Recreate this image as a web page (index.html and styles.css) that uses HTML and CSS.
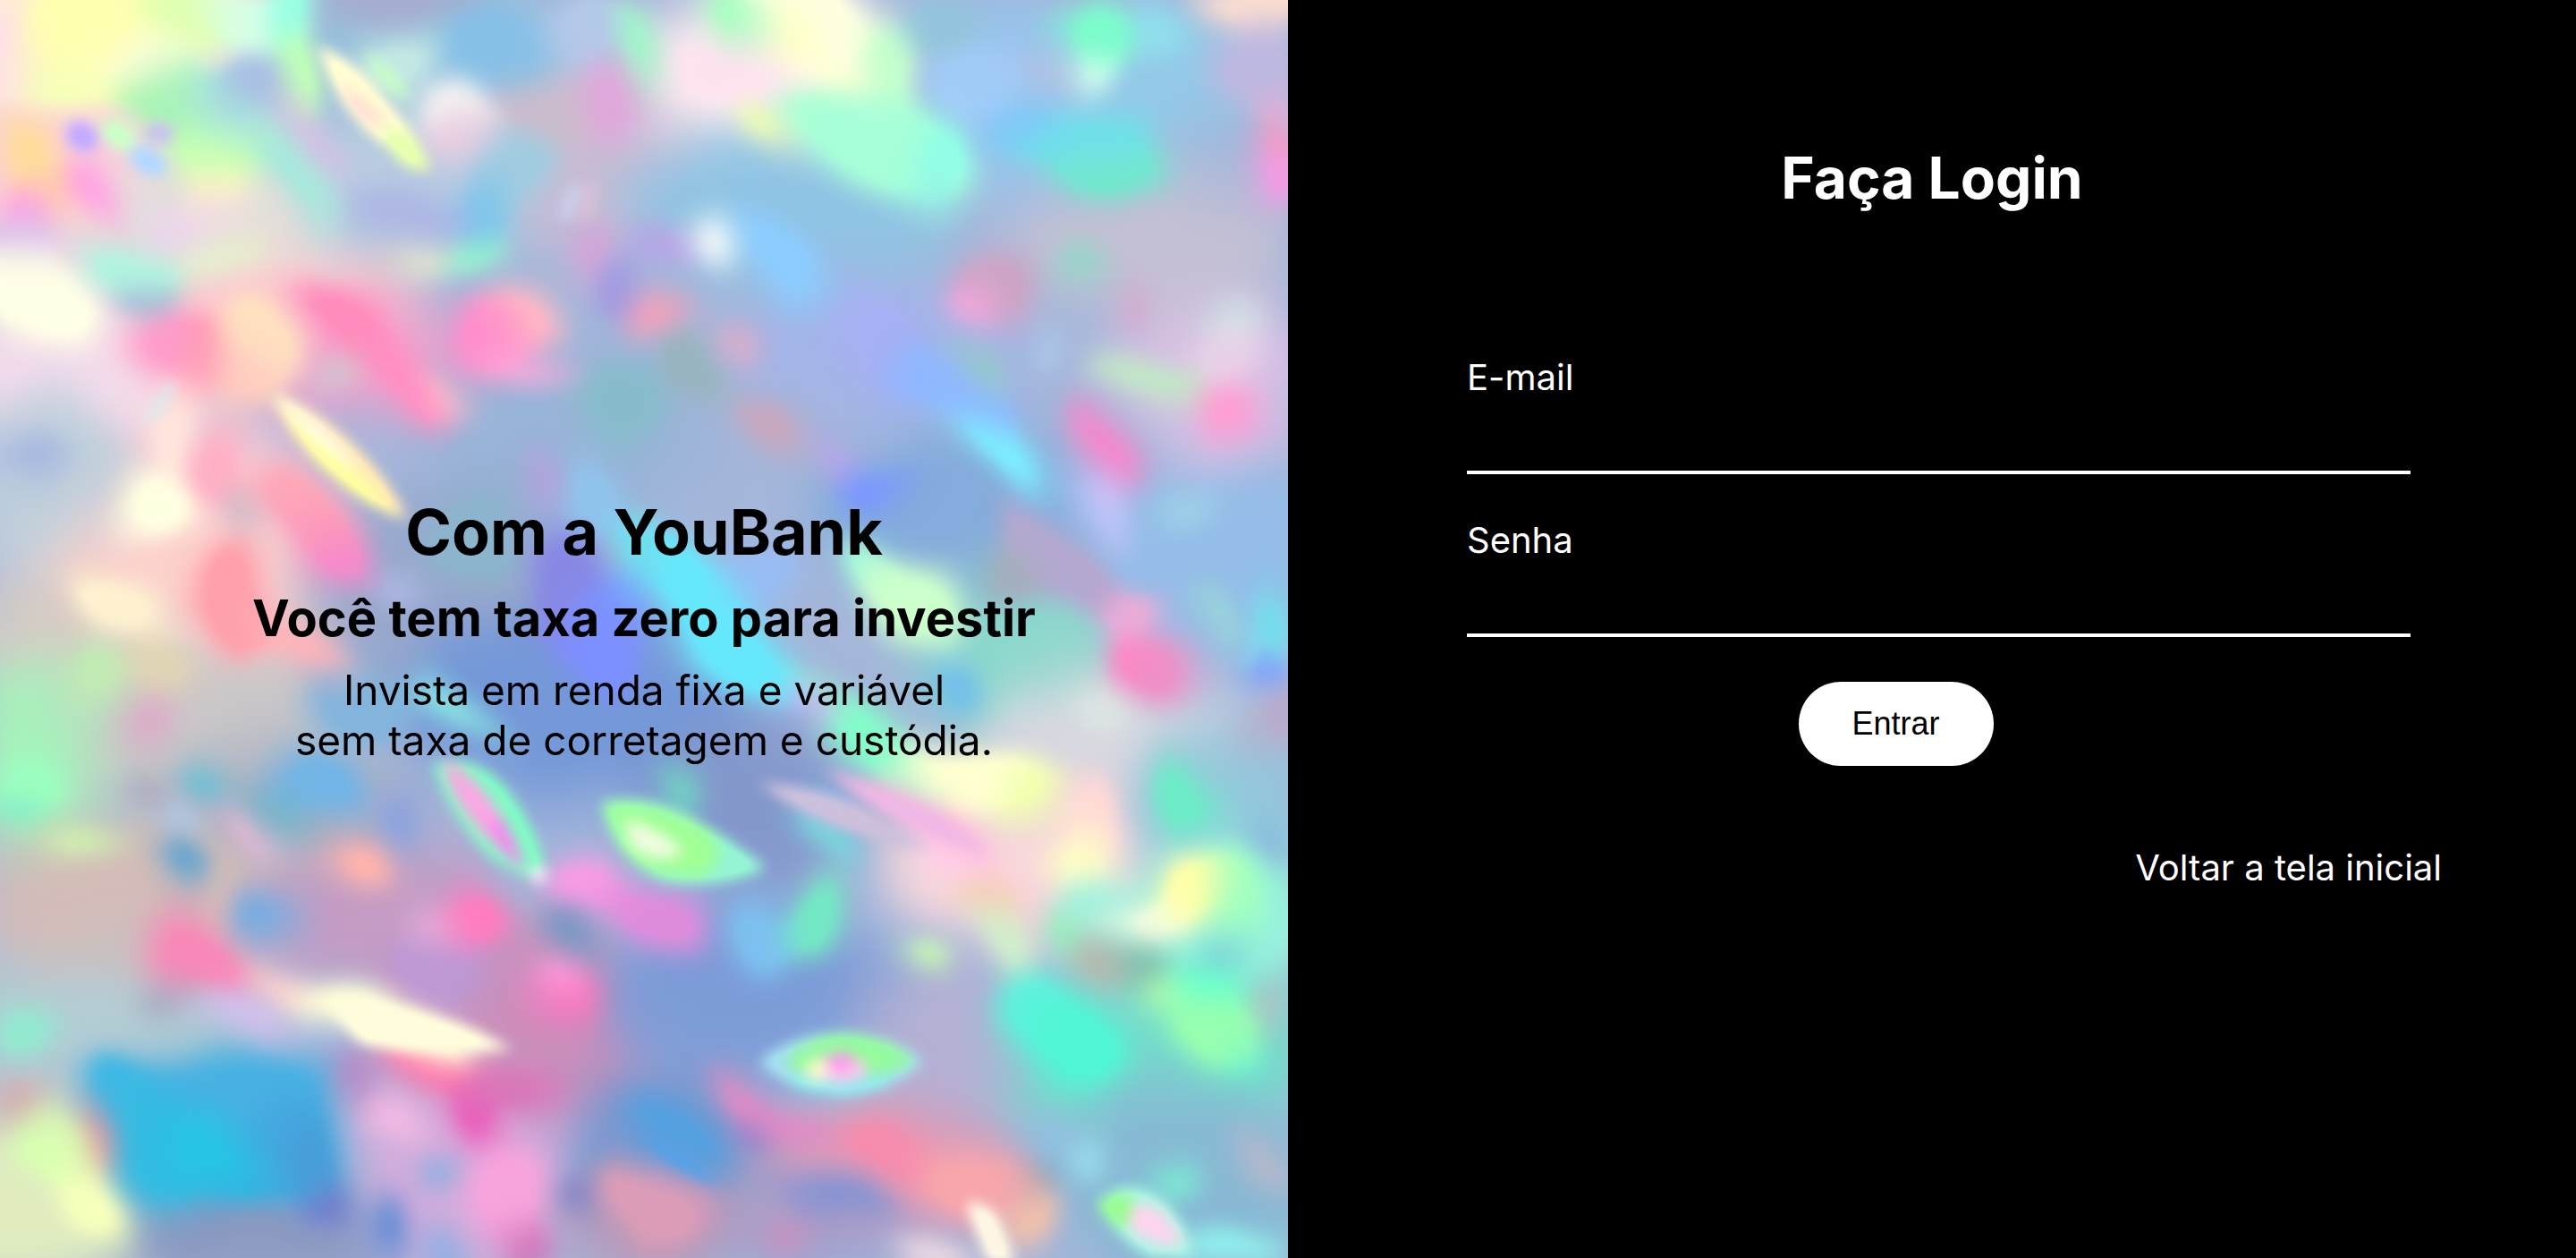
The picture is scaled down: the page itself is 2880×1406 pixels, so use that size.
FILE: index.html
```html
<!DOCTYPE html>
<html lang="pt-BR">
<head>
<meta charset="utf-8">
<meta name="viewport" content="width=device-width, initial-scale=1">
<title>YouBank - Login</title>
<link rel="stylesheet" href="styles.css">
</head>
<body>
<main class="page">
<section class="promo">
<svg class="promo-art" viewBox="0 0 784 765" preserveAspectRatio="none" aria-hidden="true">
<defs>
<filter id="wide" filterUnits="userSpaceOnUse" x="-60" y="-60" width="904" height="885" color-interpolation-filters="sRGB"><feGaussianBlur stdDeviation="16"/></filter>
<filter id="soft" filterUnits="userSpaceOnUse" x="-60" y="-60" width="904" height="885" color-interpolation-filters="sRGB"><feGaussianBlur stdDeviation="9"/><feComponentTransfer><feFuncA type="linear" slope="1.4"/></feComponentTransfer></filter>
<filter id="flow" filterUnits="userSpaceOnUse" x="-60" y="-60" width="904" height="885" color-interpolation-filters="sRGB"><feTurbulence type="fractalNoise" baseFrequency="0.016" numOctaves="1" seed="4" result="noise"/><feDisplacementMap in="SourceGraphic" in2="noise" scale="36" xChannelSelector="R" yChannelSelector="G"/><feGaussianBlur stdDeviation="3"/></filter>
<filter id="fine" filterUnits="userSpaceOnUse" x="-60" y="-60" width="904" height="885" color-interpolation-filters="sRGB"><feGaussianBlur stdDeviation="4"/><feComponentTransfer><feFuncA type="linear" slope="1.2"/></feComponentTransfer></filter>
</defs>
<g filter="url(#flow)">
<g id="fields" filter="url(#wide)"><rect x="-60" y="-60" width="904" height="885" fill="#a4b6da"/></g>
<g id="patches" filter="url(#soft)"></g>
</g>
<!-- sharp glints and facets -->
<g filter="url(#fine)">
<ellipse cx="50" cy="83" rx="10" ry="8" transform="rotate(35 50 83)" fill="#c4acff"/>
<ellipse cx="72" cy="82" rx="12" ry="7" transform="rotate(35 72 82)" fill="#ccffc8"/>
<ellipse cx="97" cy="81" rx="9" ry="6" fill="#c8c4ec"/>
<ellipse cx="90" cy="98" rx="12" ry="7" transform="rotate(30 90 98)" fill="#b4d8ff"/>
<path d="M193 28Q215 36 232 58Q256 84 261 102Q250 106 240 92Q214 76 202 50Z" fill="#fffdd2"/>
<path d="M206 50Q216 56 236 76Q230 78 218 68Z" fill="#ffd0d8"/>
<path d="M232 80Q248 72 262 102Q250 106 240 94Z" fill="#e6ffae"/>
<path d="M222 32Q242 42 250 62Q234 56 222 32Z" fill="#c8ffc4"/>
<path d="M164 238Q186 244 212 268Q236 290 248 316Q220 308 190 278Q172 258 164 238Z" fill="#ffe6b8"/>
<path d="M172 250Q196 260 216 284Q234 302 240 312Q212 300 192 278Z" fill="#ffff9e"/>
<path d="M166 240Q196 256 220 288Q192 270 166 240Z" fill="#fffff4"/>
<path d="M104 234Q98 246 90 256" fill="none" stroke="#dce8ec" stroke-width="6"/>
<path d="M361 112L356 134" stroke="#e4c4d8" stroke-width="4"/>
<path d="M351 112L343 134" stroke="#ccd0ec" stroke-width="7"/>
<path d="M264 464Q288 458 308 480Q328 506 332 534Q312 534 292 514Q270 488 264 464Z" fill="#80fcc4"/>
<path d="M270 462Q300 476 320 528Q296 512 284 494Q272 478 270 462Z" fill="#ffa4e4"/>
<path d="M304 496Q316 512 318 528Q304 518 298 502Z" fill="#f884f0"/>
<circle cx="328" cy="532" r="5" fill="#f8e0f8"/>
<path d="M366 488Q394 482 422 498Q452 516 466 528Q440 540 406 536Q374 524 366 488Z" fill="#94f4d4"/>
<path d="M368 490Q400 486 430 506Q446 522 428 532Q394 534 380 516Z" fill="#a0ff94"/>
<path d="M380 498Q404 504 416 518Q400 528 384 514Z" fill="#f0fce0"/>
<path d="M462 476Q492 478 522 490L566 516Q508 510 462 476Z" fill="#ccc0dc"/>
<path d="M502 468Q532 476 568 494Q592 508 602 520Q546 502 502 468Z" fill="#f0b8e4"/>
<path d="M462 646Q484 628 514 628Q546 630 562 646Q542 664 514 666Q482 664 462 646Z" fill="#a4ddf0"/>
<path d="M478 646Q494 628 518 630Q544 632 556 646Q532 658 510 654Q488 658 478 646Z" fill="#94fc9c"/>
<path d="M482 658Q506 666 540 658" fill="none" stroke="#84f4f0" stroke-width="4"/>
<ellipse cx="510" cy="650" rx="18" ry="8" fill="#ffccec"/>
<ellipse cx="497" cy="651" rx="7" ry="6" fill="#fffcc8"/>
<ellipse cx="512" cy="646" rx="8" ry="6" fill="#ff98ec"/>
<path d="M668 732Q684 714 708 730Q724 746 726 764H700Q680 752 668 732Z" fill="#a8f8e4"/>
<path d="M668 734Q678 722 692 730L684 748Z" fill="#98fc90"/>
<path d="M690 732Q710 730 720 758Q696 758 686 744Z" fill="#ffd4ee"/>
<path d="M588 732Q600 730 608 742L618 768H602Z" fill="#fdf6e4"/>
<path d="M766 384L758 406" stroke="#80e0f4" stroke-width="3"/>
<path d="M390 690Q416 700 440 720Q412 714 390 690Z" fill="#4ca4ec"/>
<path d="M200 612Q250 606 312 638Q262 642 220 634Z" fill="#fffcdc"/>
</g>
</svg>
<div class="promo-copy">
<h1 class="promo-title">Com a YouBank</h1>
<h2 class="promo-subtitle">Você tem taxa zero para investir</h2>
<p class="promo-text">Invista em renda fixa e variável<br>sem taxa de corretagem e custódia.</p>
</div>
</section>
<section class="login">
<h2 class="login-title">Faça Login</h2>
<form class="login-form">
<div class="field">
<label class="field-label" for="email">E-mail</label>
<input class="field-input" id="email" name="email" type="email">
</div>
<div class="field">
<label class="field-label" for="senha">Senha</label>
<input class="field-input" id="senha" name="senha" type="password">
</div>
<button class="submit" type="submit">Entrar</button>
</form>
<a class="back-link" href="#">Voltar a tela inicial</a>
</section>
</main>
<script src="art.js"></script>
</body>
</html>
```
FILE: art.js
```js
// Each spot of the holographic artwork: centre x, centre y, radius x, radius y, rotation, colour.
const fields = `
50 20 130 70 0 ffecd8|40 110 70 60 0 fcd0dc|140 130 80 45 0 e0e0dc|260 100 80 50 0 b8cce0
260 25 90 40 0 98c0dc|360 100 50 60 0 c8bcd4|470 40 80 50 0 ffeef0|620 60 60 60 0 98c4ec
700 50 60 50 0 94c8e8|480 125 100 45 0 90c4e4|700 150 90 40 0 c4c0d4|50 220 90 50 0 f4dcec
170 190 90 40 0 fcccd0|230 220 80 35 0 f4a0cc|340 270 90 60 0 98b4d8|540 210 90 40 0 a4b4e8
740 230 60 50 0 d8c0e4|120 310 80 60 0 fcccd4|30 300 50 60 0 c0d0dc|100 370 90 60 0 fcd0cc
270 370 80 70 0 98a8cc|580 310 90 50 0 84acdc|730 340 80 60 0 94bce8|30 390 50 40 0 d8ccc4
120 440 90 50 0 ccc8c8|20 460 45 60 0 a8f0bc|350 430 110 60 0 7498d8|620 400 60 50 0 8cd8cc
680 450 90 40 0 d8d8e0|745 490 50 50 0 94c8dc|170 500 80 50 0 a8b0c4|80 550 100 50 0 d4bcb8
240 560 80 45 0 c49cc4|460 490 70 50 0 8498cc|60 620 100 40 0 b4ccd4|320 620 80 60 0 c890bc
450 600 90 50 0 7c9cd8|620 530 80 45 0 f8d8dc|740 560 70 50 0 98f4dc|700 640 110 50 0 74dccc
570 640 50 50 0 b4b0d4|20 730 70 60 0 e0ecc0|130 690 80 50 0 50b0dc|150 755 80 30 0 8c98c0
280 715 60 60 0 d8acdc|410 690 70 40 0 7898d0|400 745 60 30 0 b898b8|540 710 80 40 0 dc9cb8
720 720 80 60 0 88b8d4|500 755 60 18 0 a09ccc`;

const patches = `
8 35 16 25 0 ffdfe8|65 20 44 40 0 ffffb0|110 10 26 24 0 e0ffb0|145 12 22 20 0 d8ffe8
174 10 15 26 0 98ffe4|85 38 26 8 0 fffde0|40 52 28 14 0 f6ffb8|108 62 36 14 15 a8f4b4
150 50 20 16 0 a8bce4|245 2 50 7 0 a8a8cc|298 32 30 24 0 86c0e6|355 18 26 24 0 b4c8e8
245 38 18 16 0 c4e8e4|182 42 13 26 -20 c0ffb8|388 28 9 26 -15 a0f8c8|275 70 22 12 0 f4f4f2
278 88 24 12 0 e8cce0|330 68 30 18 0 ccbccc|370 62 24 11 30 e2a6dc|160 90 68 12 40 a8e8dc
192 84 38 8 42 d4c0e4|310 105 30 20 -30 a0cce0|22 104 12 38 -28 ffdc9c|56 116 11 18 -30 ffa4e4
18 130 16 13 0 ffa4e0|12 150 20 12 0 dcc4ec|130 93 26 14 20 c8ffb4|130 115 14 9 30 fff4c0
112 132 28 9 0 ecd4ec|75 160 34 12 0 b0f4e0|135 152 30 8 0 e6f0cc|248 130 34 11 0 aeb8e4
290 128 16 18 0 80c4ec|286 154 20 10 -20 94f0d0|252 160 20 9 0 dce0d0|24 186 42 20 25 ffffe6
88 178 18 9 0 a8bcd8|104 206 18 18 0 ff9ccc|122 216 14 24 0 ff9cb8|156 208 20 26 0 ffe0c0
148 235 20 12 0 ffccc0|215 200 42 15 45 ff8cbc|250 232 30 13 52 ff90c4|202 228 18 9 0 d4c4d0
276 238 12 8 30 fcbccc|318 190 18 14 30 ffbcc4|304 204 16 20 -30 ff8ccc|322 222 24 6 25 fcacdc
376 180 12 12 0 9c98e4|360 155 12 18 0 d0a8d8|400 196 24 8 -8 f8a0b8|378 244 34 18 20 88bccc
490 12 34 26 0 ffffe0|448 12 26 10 40 a4ffc0|482 20 12 9 0 ffffb8|445 42 40 17 10 ffe2f0
538 36 15 24 -20 c4ffcc|505 70 24 14 30 ccffcc|518 52 28 8 40 ffffd4|542 88 60 26 22 a6ffd8
576 95 19 22 0 92fee6|570 120 14 8 0 94f0e4|468 80 20 8 30 f0ffb0|574 16 26 16 0 94c4dc
595 50 26 16 0 a2ccf8|662 18 20 20 0 7cfccc|658 44 12 10 0 d8fcf0|633 50 9 8 0 bcbcdc
702 22 20 14 0 90dcec|768 4 38 12 0 fadcd0|762 40 26 20 0 bcb8e0|662 86 42 16 0 70e0ea
676 106 38 11 0 72e8cc|623 74 16 12 0 80c8f8|778 108 14 22 0 f09ce4|776 86 10 12 0 ee9cc4
776 64 12 10 0 dcb0d8|432 145 12 14 -25 eaf6f8|402 153 18 13 0 b4a8e4|474 160 36 12 50 8cccff
606 172 26 18 20 cca4c4|592 181 12 11 0 f4a8e0|658 163 12 14 0 98d4c8|692 187 9 10 0 d8a8cc
752 193 14 7 20 d0e8e4|540 212 42 16 45 a6b0f4|580 240 44 13 28 8eb8ff|595 222 9 18 -20 98c8cc
640 212 14 9 40 acc8e8|748 218 18 16 0 e8d0e8|702 230 32 8 8 c0ecc4|745 249 24 10 0 ff9cd4
455 208 14 8 35 e4acc8|424 226 22 16 30 98b4c0|468 258 24 11 30 c8a8c0|16 284 18 10 30 a8b8e0
104 258 12 26 0 ffe6dc|94 304 23 20 0 ffffe2|138 284 16 22 0 ffb0c4|186 308 20 26 -35 ffa8b8
200 328 18 26 -50 fc98bc|210 340 20 11 0 f688cc|150 315 9 18 0 d4bcc8|72 368 34 16 30 fff2d0
142 368 20 32 0 ffa0ac|182 396 40 9 38 ffb4b8|245 356 16 9 0 acb8e4|290 325 26 22 0 8cb4cc
325 292 14 12 0 b0a4dc|362 300 18 24 0 90c4ec|342 355 15 40 -8 8888e4|368 388 20 32 -15 7c90ff
432 376 80 20 40 66e8fc|385 340 14 24 0 74dcec|462 350 20 14 0 98bcf4|55 410 13 18 -25 c0ecb4
90 410 18 14 0 e0d4b4|88 441 15 8 0 e0a4c8|18 470 24 16 0 9cffc0|10 488 16 8 0 84ecc8
130 470 16 10 0 70c0d4|88 478 10 8 0 a8a4bc|192 474 26 14 50 72b4e6|172 492 24 8 60 78b4c4
220 430 30 20 0 82b4dc|278 432 34 7 40 8cece4|108 498 14 9 0 b0c8e4|158 505 24 9 50 e0b8d4
240 498 20 12 30 90a4dc|608 276 38 11 33 7cecff|532 292 20 11 10 7a98fe|508 275 14 7 20 c0a4e8
674 274 28 10 62 f08acc|672 308 24 9 55 c0c4f8|722 305 18 9 0 9cd0e8|645 345 50 18 40 b4a8d0
686 374 20 16 0 eaacd8|708 410 22 16 30 ee90c8|690 404 13 11 0 ff84c4|742 375 24 10 55 98d0dc
780 378 12 24 0 78dcec|768 410 12 12 0 80a4fa|775 442 18 16 0 b8accc|530 344 16 16 0 a0f4dc
556 366 34 17 40 ccffcc|612 350 16 14 0 a2b0bc|528 446 62 12 40 84fcca|494 424 16 7 40 d8a0f4
582 414 16 14 0 74c0e8|668 430 20 12 0 dce4e2|592 474 44 17 18 ffffd0|622 486 14 13 0 f2ffae
726 484 16 20 -25 6cecc8|415 480 11 10 0 6ce0c4|510 492 20 8 30 80b8e8|572 500 44 9 32 ffb4dc
660 500 18 20 0 ffd8d8|505 512 30 9 45 7cd4dc|48 515 20 9 10 d0f0b0|106 530 18 13 35 72a8cc
215 527 19 12 15 ffb4ac|165 558 20 11 10 7cacdf|124 580 36 14 25 f888b8|262 562 10 14 -30 e0acd8
288 556 20 18 0 ff7cc0|362 538 20 15 0 f89ce4|346 568 12 18 0 8098c4|106 602 14 7 20 a4a8c0
268 590 26 16 20 bc98d4|338 612 20 14 0 f078bc|334 602 9 9 0 ffa4e4|15 628 16 18 0 94e8d0
150 618 30 9 20 d0c0ec|84 668 30 18 30 40b8e4|112 690 34 34 0 34bce2|150 664 50 20 -3 48b2e2
174 694 30 30 0 44a8e0|145 714 16 18 0 34b4e0|128 696 26 16 20 24c6e6|184 700 16 16 0 489cd8
180 605 30 8 30 fccccc|268 650 42 8 8 ff74ac|305 662 30 12 0 d878b8|235 622 58 12 14 ffffd8
290 680 11 18 -30 ea60bc|218 660 24 8 55 b48cc8|242 682 11 13 0 f8bce4|268 715 12 10 0 8cb0e0
312 725 19 28 0 f8a4dc|34 700 24 16 20 d8ffb2|56 730 16 26 -25 f6ffbc|60 690 8 12 -30 e08ca0
14 674 20 8 0 d0a8b4|194 730 12 14 -30 7480cc|234 746 14 11 0 668ed6|272 757 12 9 0 80b0e4
320 758 14 10 0 cc74b8|354 728 9 14 0 8484c4|386 730 10 28 -20 d49cb0|400 560 32 14 25 e08cdc
462 566 14 26 -20 7cc0f0|496 560 17 22 0 74e8c4|560 586 12 10 0 ccffb0|596 530 40 10 35 ffd0e8
606 546 18 12 20 f4d0b8|612 572 22 10 50 d0f0cc|656 520 13 15 0 ffffc4|668 545 14 14 0 a4f0de
652 566 12 9 30 8cf4bc|702 560 20 12 0 f0fce0|750 545 12 24 -15 a0ffc0|722 540 17 21 -20 ffffa8
770 510 14 16 0 8cc0dc|672 586 16 10 40 b8b8ac|698 588 13 10 0 7cbcb0|748 579 12 8 0 78d0d8
632 615 20 24 -30 60f0dc|654 636 32 22 40 50f6d6|738 602 24 10 0 6cffcc|710 605 12 8 0 b4fca8
742 628 28 18 0 98ffb0|758 643 12 8 0 74f4cc|778 614 8 11 0 b8bcc0|412 690 38 11 32 54a0e0
470 675 42 10 30 e08cc4|462 687 12 8 20 8c84d0|592 716 36 15 15 f8a6ac|538 702 30 14 10 f68cae
402 732 30 16 20 dc9cb8|505 730 42 8 12 8094d4|476 752 14 8 0 cc90bc|572 764 30 8 0 f0dce4
628 744 12 16 0 f0c0ac|640 696 9 24 -15 90c0e0|632 718 7 11 0 84a8b8|664 706 10 14 0 98dcec
715 712 12 11 0 7cecd4|768 706 24 8 45 b8b8cc|745 758 28 9 0 90f0ec`;

function drawSpots(groupId, spots) {
  const group = document.getElementById(groupId);
  for (const spot of spots.trim().split(/[|\n]/)) {
    const [cx, cy, rx, ry, angle, colour] = spot.split(" ");
    const ellipse = document.createElementNS("http://www.w3.org/2000/svg", "ellipse");
    ellipse.setAttribute("cx", cx);
    ellipse.setAttribute("cy", cy);
    ellipse.setAttribute("rx", rx);
    ellipse.setAttribute("ry", ry);
    ellipse.setAttribute("transform", `rotate(${angle} ${cx} ${cy})`);
    ellipse.setAttribute("fill", `#${colour}`);
    group.append(ellipse);
  }
}

drawSpots("fields", fields);
drawSpots("patches", patches);
```
FILE: styles.css
```css
* {
  box-sizing: border-box;
  margin: 0;
  padding: 0;
}

body {
  background: #000;
  font-family: Inter, "Liberation Sans", sans-serif;
}

.page {
  display: grid;
  grid-template-columns: 1fr 1fr;
  min-height: 100vh;
}

.promo {
  position: relative;
  display: flex;
  align-items: center;
  justify-content: center;
  overflow: hidden;
  color: #000;
  text-align: center;
}

.promo-art {
  position: absolute;
  inset: 0;
  width: 100%;
  height: 100%;
}

.promo-copy {
  position: relative;
  display: flex;
  flex-direction: column;
  gap: 18px;
}

.promo-title {
  font-size: 70px;
  font-weight: 700;
  line-height: 88px;
}

.promo-subtitle {
  font-size: 56px;
  font-weight: 700;
  line-height: 68px;
}

.promo-text {
  font-size: 46px;
  line-height: 56px;
}

.login {
  display: flex;
  flex-direction: column;
  padding: 160px 150px 50px 200px;
  background: #000;
  color: #fff;
}

.login-title {
  margin-left: -50px;
  margin-bottom: 160px;
  font-size: 64px;
  font-weight: 700;
  line-height: 78px;
  text-align: center;
}

.login-form {
  display: flex;
  flex-direction: column;
  gap: 50px;
  width: 88%;
}

.field {
  display: flex;
  flex-direction: column;
  width: 110%;
}

.field-label {
  font-size: 40px;
  line-height: 48px;
}

.field-input {
  height: 84px;
  border: 0;
  border-bottom: 4px solid #fff;
  background: transparent;
  color: #fff;
  font: inherit;
  font-size: 40px;
  outline: 0;
}

.submit {
  align-self: center;
  padding: 26px 60px;
  border: 0;
  border-radius: 50px;
  background: #fff;
  color: #000;
  font-family: "Liberation Sans", Arial, sans-serif;
  font-size: 36px;
  line-height: 42px;
  cursor: pointer;
}

.back-link {
  align-self: flex-end;
  margin-top: 90px;
  color: #fff;
  font-size: 40px;
  line-height: 48px;
  text-decoration: none;
}
```
